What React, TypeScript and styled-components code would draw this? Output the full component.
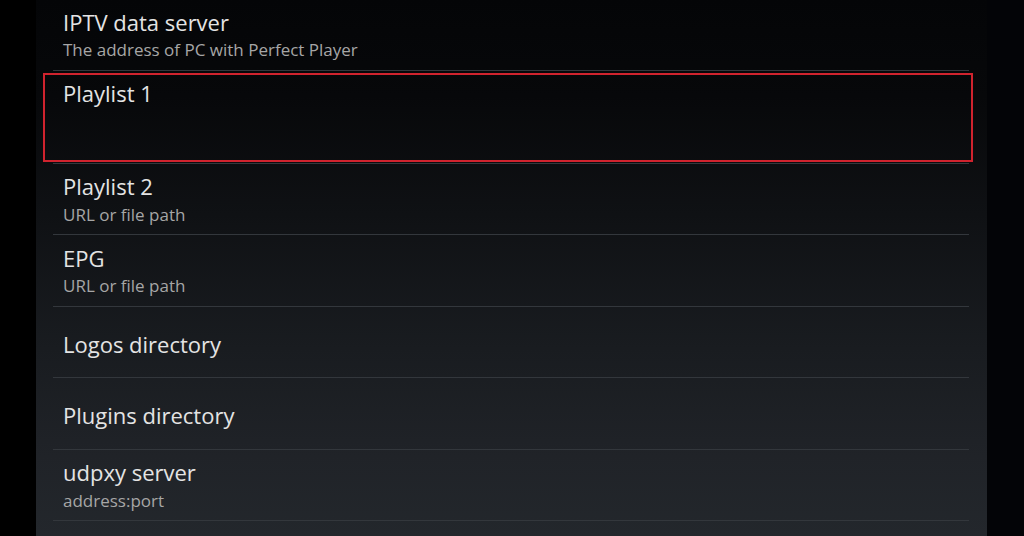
import styled, { createGlobalStyle } from 'styled-components';

interface Setting {
  title: string;
  summary?: string;
  height: number;
  centered?: boolean;
  selected?: boolean;
}

const settings: Setting[] = [
  { title: 'IPTV data server', summary: 'The address of PC with Perfect Player', height: 71.5 },
  { title: 'Playlist 1', height: 93, selected: true },
  { title: 'Playlist 2', summary: 'URL or file path', height: 71.5 },
  { title: 'EPG', summary: 'URL or file path', height: 71.5 },
  { title: 'Logos directory', height: 71.5, centered: true },
  { title: 'Plugins directory', height: 71.5, centered: true },
  { title: 'udpxy server', summary: 'address:port', height: 71.5 },
  { title: '', height: 71.5 },
];

const GlobalStyle = createGlobalStyle`
  html, body {
    margin: 0;
    padding: 0;
    background: #000;
  }
  body {
    font-family: "Open Sans", "Noto Sans", "Liberation Sans", sans-serif;
  }
`;

export default function App() {
  return (
    <>
      <GlobalStyle />
      <StScreen>
        <StPanel>
          <StList>
            {settings.map((s, i) => (
              <StRow key={i} $height={s.height} $centered={!!s.centered}>
                {s.title && <StTitle>{s.title}</StTitle>}
                {s.summary && <StSummary>{s.summary}</StSummary>}
                {s.selected && <StFocusFrame />}
              </StRow>
            ))}
          </StList>
        </StPanel>
      </StScreen>
    </>
  );
}

const StScreen = styled.div`
  width: 1024px;
  height: 536px;
  overflow: hidden;
  display: flex;
  background: linear-gradient(90deg, #000 0px, #000 36px, #030407 987px, #030407 100%);
`;

const StPanel = styled.div`
  margin-left: 36px;
  width: 951px;
  height: 100%;
  box-sizing: border-box;
  padding: 0 18px 0 17px;
  background: linear-gradient(
    180deg,
    #040507 0%,
    #07080a 18%,
    #0f1114 40%,
    #191c20 65%,
    #202328 85%,
    #23272c 100%
  );
`;

const StList = styled.div`
  display: flex;
  flex-direction: column;
  margin-top: -1px;
`;

const StRow = styled.div<{ $height: number; $centered: boolean }>`
  position: relative;
  flex: none;
  height: ${(p) => p.$height}px;
  box-sizing: border-box;
  padding: ${(p) => (p.$centered ? '24px' : '9.5px')} 8px 0 10px;
  border-bottom: 1px solid #33373c;
  display: flex;
  flex-direction: column;
`;

const StTitle = styled.div`
  font-size: 22px;
  line-height: 26px;
  color: #e4e4e4;
  white-space: nowrap;
`;

const StSummary = styled.div`
  margin-top: 5.5px;
  font-size: 17px;
  line-height: 20px;
  color: #a6a6a6;
  white-space: nowrap;
`;

const StFocusFrame = styled.div`
  position: absolute;
  top: 2px;
  bottom: 1px;
  left: -10px;
  right: -4px;
  border: 2.5px solid #d0232e;
  pointer-events: none;
`;
